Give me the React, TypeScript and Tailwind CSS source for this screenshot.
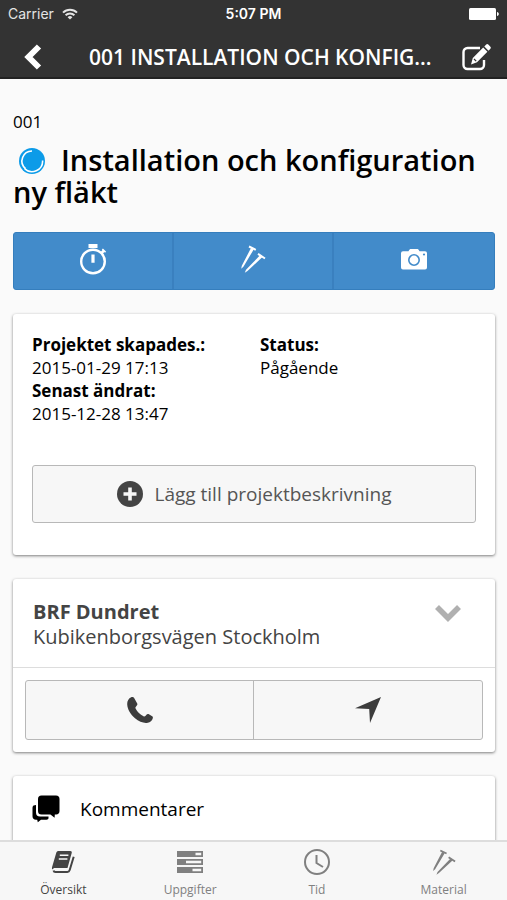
import type { ReactNode } from 'react';
import clsx from 'clsx';

type IconProps = { className?: string };

function WifiIcon({ className }: IconProps) {
  return (
    <svg viewBox="0 0 16 12" className={className} fill="none" stroke="currentColor" strokeWidth="2" aria-hidden="true">
      <path d="M1 4.6a10 10 0 0 1 14 0" />
      <path d="M3.6 7.3a6.3 6.3 0 0 1 8.8 0" />
      <path d="M8 11.6 5.6 9.2a3.4 3.4 0 0 1 4.8 0z" fill="currentColor" stroke="none" />
    </svg>
  );
}

function BatteryIcon({ className }: IconProps) {
  return (
    <svg viewBox="0 0 30 12" className={className} fill="currentColor" aria-hidden="true">
      <rect width="27" height="12" rx="1.5" />
      <path d="M28 4c2.4.4 2.4 3.6 0 4z" />
    </svg>
  );
}

function BackIcon({ className }: IconProps) {
  return (
    <svg viewBox="0 0 18 26" className={className} fill="none" stroke="currentColor" strokeWidth="6" aria-hidden="true">
      <path d="M15 2.5 4.5 13 15 23.5" />
    </svg>
  );
}

function EditIcon({ className }: IconProps) {
  return (
    <svg viewBox="0 0 30 28" className={className} aria-hidden="true">
      <path
        d="M18 5H5.5a4 4 0 0 0-4 4v13a4 4 0 0 0 4 4H18a4 4 0 0 0 4-4v-5"
        fill="none"
        stroke="currentColor"
        strokeWidth="2.4"
      />
      <path
        d="M9 21.5 10.8 15 21.2 4.600l4.200 4.200L15 19.200zM22.300 3.500l1.900-1.900a1.500 1.500 0 0 1 2.100 0l2.100 2.100a1.500 1.500 0 0 1 0 2.100l-1.900 1.900z"
        fill="currentColor"
      />
      <path d="m12 16 2.200 2.200" stroke="#333" strokeWidth="1.2" />
    </svg>
  );
}

function StatusIcon({ className }: IconProps) {
  return (
    <svg viewBox="0 0 26 26" className={className} aria-hidden="true">
      <circle cx="13" cy="13" r="13" fill="#0c9be8" />
      <path d="M13 3a10 10 0 0 0-6.5 17.6" fill="none" stroke="#fff" strokeWidth="1.6" />
      <path d="M23.6 12.5A10.6 10.6 0 0 1 5.5 20.5" fill="none" stroke="#fff" strokeWidth="1.6" />
    </svg>
  );
}

function StopwatchIcon({ className }: IconProps) {
  return (
    <svg viewBox="0 0 28 32" className={className} aria-hidden="true">
      <circle cx="14" cy="18.5" r="11.8" fill="none" stroke="currentColor" strokeWidth="2.4" />
      <path d="M9.5 1h9v4h-9zM12.4 11.5h3.2v8.3h-3.2z" fill="currentColor" />
      <path d="m22 10.500 3-3" stroke="currentColor" strokeWidth="2.6" />
      <path d="m23.400 6 3.200 3.200" stroke="currentColor" strokeWidth="1.6" />
    </svg>
  );
}

function ScrewsIcon({ className }: IconProps) {
  return (
    <svg viewBox="0 0 26 28" className={className} aria-hidden="true">
      <path d="M9 1.500 15.800 4.800M18 8.800l7 4.700" fill="none" stroke="currentColor" strokeWidth="2" />
      <path
        d="m11 3 2.700 1.400L3.400 21.800 1.200 23.800l.6-3zM19.800 10.500l2.400 1.800L7.500 26l-2.700 1.700 1.200-3z"
        fill="currentColor"
      />
    </svg>
  );
}

function CameraIcon({ className }: IconProps) {
  return (
    <svg viewBox="0 0 26 22" className={className} aria-hidden="true">
      <path
        d="M7.5 3.2C8.2 1.5 9 1 10 1h6c1 0 1.8.5 2.500 2.200H24a2 2 0 0 1 2 2V19.500a2 2 0 0 1-2 2H2a2 2 0 0 1-2-2V5.200a2 2 0 0 1 2-2z"
        fill="currentColor"
      />
      <circle cx="13" cy="12" r="5.2" fill="none" stroke="#428bca" strokeWidth="1.6" />
      <circle cx="23" cy="6.500" r="1.1" fill="#428bca" />
    </svg>
  );
}

function PlusCircleIcon({ className }: IconProps) {
  return (
    <svg viewBox="0 0 26 26" className={className} aria-hidden="true">
      <circle cx="13" cy="13" r="13" fill="currentColor" />
      <path d="M13 6.5v13M6.5 13h13" stroke="#f7f7f7" strokeWidth="3.6" />
    </svg>
  );
}

function ChevronIcon({ className }: IconProps) {
  return (
    <svg viewBox="0 0 26 17" className={className} fill="none" stroke="currentColor" strokeWidth="5.6" aria-hidden="true">
      <path d="m2 2 11 11L24 2" />
    </svg>
  );
}

function PhoneIcon({ className }: IconProps) {
  return (
    <svg viewBox="0 0 26 26" className={className} fill="currentColor" aria-hidden="true">
      <path d="M4.200.2C1.500 1.300.1 4.200.2 7.300.4 12.300 3.600 17.600 8 21.300c4.100 3.500 9 5.300 12.800 4.500 2.400-.5 4.300-2.100 5-4.600.2-.8.1-1.300-.6-1.900l-3.700-2.200c-.7-.4-1.400-.2-1.800.4l-1.300 1.500c-.5.5-1.100.7-1.900.3-3.500-1.700-6.100-4.200-7.900-7.700-.4-.7-.2-1.300.3-1.800l1.100-1.500c.5-.6.5-1.300.1-2L7 .8C6.300-.1 5.200-.2 4.200.2z" />
    </svg>
  );
}

function LocationIcon({ className }: IconProps) {
  return (
    <svg viewBox="0 0 26 26" className={className} fill="currentColor" aria-hidden="true">
      <path d="M26 0 15 26l-.8-14L0 11.200z" />
    </svg>
  );
}

function CommentsIcon({ className }: IconProps) {
  return (
    <svg viewBox="0 0 28 28" className={className} fill="currentColor" aria-hidden="true">
      <path d="M9.500.5H24A3.500 3.500 0 0 1 27.500 4v12c0 2-1.200 3.500-3.300 3.500h-1.400l-.2 3.300-4.200-3.300H9.500A3.500 3.500 0 0 1 6 16V4A3.500 3.500 0 0 1 9.500.5z" />
      <path d="M1.500 10.500 4 10v7.500c0 2.600 1.300 4 4 4h8.500V23c0 1-.8 1.700-2 1.700H9l-3.200 2.600-.6-2.600H4c-2.200 0-3.500-1.300-3.500-3.400v-8.500c0-1 .3-1.800 1-2.300z" />
    </svg>
  );
}

function BookIcon({ className }: IconProps) {
  return (
    <svg viewBox="0 0 24 24" className={className} aria-hidden="true">
      <path d="M7.800 1h11.400c1.300 0 1.900.9 1.500 2.100L16.500 18H4.200c-1.500 0-2.400.6-2.700 1.600-.6-.6-.7-1.500-.4-2.600L5.200 2.900C5.600 1.600 6.500 1 7.800 1z" fill="currentColor" />
      <path
        d="M2.500 20.500c.2.900.9 1.400 2 1.400h11.800c1.300 0 2-.6 2.400-1.900l4-13.200"
        fill="none"
        stroke="currentColor"
        strokeWidth="2"
      />
      <path d="M8.800 5.300h8.600M7.800 9h8.600" stroke="#f7f7f7" strokeWidth="1.5" />
    </svg>
  );
}

function TasksIcon({ className }: IconProps) {
  return (
    <svg viewBox="0 0 26 22" className={className} aria-hidden="true">
      <path d="M0 0h26v6H0zM0 8h26v6H0zM0 16h26v6H0z" fill="currentColor" />
      <path d="M18.500 1.800h5.700v2.400h-5.700zM9 9.800h15.200v2.400H9zM15.500 17.800h8.700v2.400h-8.700z" fill="#f7f7f7" />
    </svg>
  );
}

function ClockIcon({ className }: IconProps) {
  return (
    <svg viewBox="0 0 26 26" className={className} fill="none" stroke="currentColor" strokeWidth="2" aria-hidden="true">
      <circle cx="13" cy="13" r="12" />
      <path d="M12.500 6v8l6.500 4" />
    </svg>
  );
}

const quickActions = [
  { label: 'Tidtagning', icon: <StopwatchIcon className="h-8 w-7" /> },
  { label: 'Material', icon: <ScrewsIcon className="h-7 w-[26px]" /> },
  { label: 'Kamera', icon: <CameraIcon className="h-[22px] w-[26px]" /> },
];

const tabs = [
  { label: 'Översikt', icon: <BookIcon className="h-6 w-6" />, active: true },
  { label: 'Uppgifter', icon: <TasksIcon className="h-[22px] w-[26px]" />, active: false },
  { label: 'Tid', icon: <ClockIcon className="h-[26px] w-[26px]" />, active: false },
  { label: 'Material', icon: <ScrewsIcon className="h-[26px] w-6" />, active: false },
];

function Card({ children }: { children: ReactNode }) {
  return (
    <section className="mt-6 rounded-[3px] bg-white shadow-[0_1px_3px_rgba(0,0,0,0.5)]">
      {children}
    </section>
  );
}

export default function App() {
  return (
    <div className="flex h-screen flex-col bg-[#fafafa] font-['Open_Sans','Noto_Sans',sans-serif] text-black">
      <header className="shrink-0 border-b-2 border-[#222] bg-[#333] text-white">
        <div className="grid h-7 grid-cols-3 items-center px-2 font-['Inter','Liberation_Sans',sans-serif] text-sm">
          <div className="flex items-center gap-2 text-[#e4e4e4]">
            <span>Carrier</span>
            <WifiIcon className="h-3 w-4" />
          </div>
          <div className="text-center font-semibold">5:07 PM</div>
          <BatteryIcon className="h-3 w-[30px] justify-self-end" />
        </div>
        <div className="flex h-[49px] items-center pt-2">
          <button type="button" aria-label="Tillbaka" className="flex w-[65px] justify-center">
            <BackIcon className="h-[26px] w-[18px]" />
          </button>
          <h1 className="flex-1 pl-6 text-[21px] leading-7 font-semibold whitespace-nowrap">
            001 INSTALLATION OCH KONFIG...
          </h1>
          <button type="button" aria-label="Redigera" className="flex w-[60px] shrink-0 justify-center">
            <EditIcon className="h-7 w-[30px]" />
          </button>
        </div>
      </header>

      <main className="min-h-0 flex-1 overflow-hidden pr-3 pl-[13px]">
        <p className="mt-[31px] text-[17px] leading-[23px]">001</p>
        <h2 className="mt-[11px] text-[29px] leading-8 font-semibold">
          <StatusIcon className="mr-4 ml-[6px] inline-block h-[26px] w-[26px] align-[-3px]" />
          Installation och konfiguration ny fläkt
        </h2>

        <div className="mt-6 grid grid-cols-3 divide-x-2 divide-[#3a80bf] rounded-[3px] border border-[#357ebd] bg-[#428bca] text-white">
          {quickActions.map(({ label, icon }) => (
            <button
              key={label}
              type="button"
              aria-label={label}
              className="flex h-14 items-center justify-center pb-1"
            >
              {icon}
            </button>
          ))}
        </div>

        <Card>
          <div className="px-[19px] pt-[19px] pb-8">
            <dl className="grid grid-cols-2 gap-3 text-[17px] leading-[23px]">
              <div>
                <dt className="font-bold">Projektet skapades.:</dt>
                <dd>2015-01-29 17:13</dd>
                <dt className="font-bold">Senast ändrat:</dt>
                <dd>2015-12-28 13:47</dd>
              </div>
              <div>
                <dt className="font-bold">Status:</dt>
                <dd>Pågående</dd>
              </div>
            </dl>
            <button
              type="button"
              className="mt-10 flex h-[58px] w-full items-center justify-center gap-3 rounded-[3px] border border-[#b8b8b8] bg-[#f7f7f7] text-[19px] text-[#555]"
            >
              <PlusCircleIcon className="h-[26px] w-[26px] text-[#444]" />
              Lägg till projektbeskrivning
            </button>
          </div>
        </Card>

        <Card>
          <div className="flex items-start justify-between border-b border-[#ddd] px-5 pt-5 pb-[18px]">
            <div className="text-xl leading-[25px] text-[#444]">
              <h3 className="font-bold">BRF Dundret</h3>
              <p>Kubikenborgsvägen Stockholm</p>
            </div>
            <button type="button" aria-label="Visa mer" className="mt-1 mr-3 p-[2px] text-[#b0b0b0]">
              <ChevronIcon className="h-[17px] w-[26px]" />
            </button>
          </div>
          <div className="p-3">
            <div className="grid grid-cols-2 divide-x divide-[#b8b8b8] rounded-[3px] border border-[#b8b8b8] bg-[#f7f7f7] text-[#3c3c3c]">
              <button type="button" aria-label="Ring" className="flex h-[58px] items-center justify-center">
                <PhoneIcon className="h-[26px] w-[26px]" />
              </button>
              <button type="button" aria-label="Vägbeskrivning" className="flex h-[58px] items-center justify-center">
                <LocationIcon className="h-[26px] w-[26px]" />
              </button>
            </div>
          </div>
        </Card>

        <Card>
          <div className="flex h-20 items-start gap-5 px-[19px] pt-[19px] text-[19px] leading-7">
            <CommentsIcon className="h-7 w-7" />
            <h3>Kommentarer</h3>
          </div>
        </Card>
      </main>

      <nav className="grid shrink-0 grid-cols-4 border-t-2 border-[#ddd] bg-[#f7f7f7]">
        {tabs.map(({ label, icon, active }) => (
          <a
            key={label}
            href="#"
            aria-current={active ? 'page' : undefined}
            className={clsx(
              'flex h-[58px] flex-col items-center text-xs',
              active ? 'text-[#444]' : 'text-[#808080]',
            )}
          >
            <span className="flex h-10 items-center">{icon}</span>
            <span>{label}</span>
          </a>
        ))}
      </nav>
    </div>
  );
}
